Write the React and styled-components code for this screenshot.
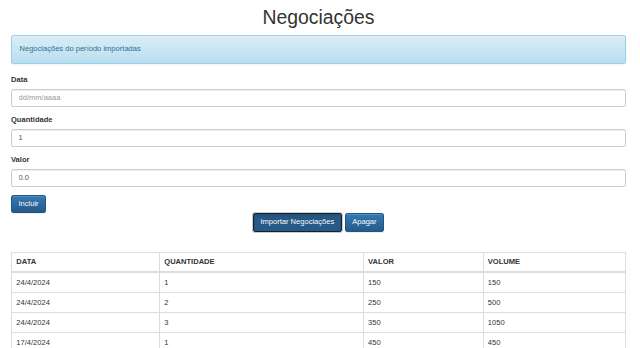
import React from "react";
import styled, { createGlobalStyle } from "styled-components";

const negociacoes = [
  { data: "24/4/2024", quantidade: 1, valor: 150, volume: 150 },
  { data: "24/4/2024", quantidade: 2, valor: 250, volume: 500 },
  { data: "24/4/2024", quantidade: 3, valor: 350, volume: 1050 },
  { data: "17/4/2024", quantidade: 1, valor: 450, volume: 450 },
];

export default function App() {
  return (
    <>
      <GlobalStyle />
      <Container>
        <Title>Negociações</Title>
        <Alert>Negociações do período importadas</Alert>
        <form>
          <FormGroup>
            <Label htmlFor="data">Data</Label>
            <Input id="data" type="text" placeholder="dd/mm/aaaa" />
          </FormGroup>
          <FormGroup>
            <Label htmlFor="quantidade">Quantidade</Label>
            <Input id="quantidade" type="text" defaultValue="1" />
          </FormGroup>
          <FormGroup>
            <Label htmlFor="valor">Valor</Label>
            <Input id="valor" type="text" defaultValue="0.0" />
          </FormGroup>
          <Button type="button">Incluir</Button>
        </form>
        <Actions>
          <Button type="button" $focused>
            Importar Negociações
          </Button>
          <Button type="button">Apagar</Button>
        </Actions>
        <Table>
          <colgroup>
            <col style={{ width: "24.1%" }} />
            <col style={{ width: "33.2%" }} />
            <col style={{ width: "19.5%" }} />
            <col style={{ width: "23.2%" }} />
          </colgroup>
          <thead>
            <tr>
              <Th>DATA</Th>
              <Th>QUANTIDADE</Th>
              <Th>VALOR</Th>
              <Th>VOLUME</Th>
            </tr>
          </thead>
          <tbody>
            {negociacoes.map((n, i) => (
              <tr key={i}>
                <Td>{n.data}</Td>
                <Td>{n.quantidade}</Td>
                <Td>{n.valor}</Td>
                <Td>{n.volume}</Td>
              </tr>
            ))}
          </tbody>
        </Table>
      </Container>
    </>
  );
}

const GlobalStyle = createGlobalStyle`
  body {
    margin: 0;
    background: #fff;
    font-family: "Liberation Sans", Arial, Helvetica, sans-serif;
    font-size: 7.56px;
    line-height: 1.42857;
    color: #333;
  }
  * {
    box-sizing: border-box;
  }
`;

const Container = styled.div`
  padding: 0 14px 0 11px;
`;

const Title = styled.h1`
  margin: 7px 0 7px;
  font-size: 19.4px;
  font-weight: 500;
  line-height: 1.1;
  text-align: center;
  color: #333;
`;

const Alert = styled.div`
  padding: 8.1px 8.1px 8.1px 7.5px;
  margin-bottom: 10.8px;
  border: 1px solid #9acfea;
  border-radius: 2.2px;
  color: #31708f;
  background-color: #d9edf7;
  background-image: linear-gradient(to bottom, #d9edf7 0, #b9def0 100%);
  box-shadow: inset 0 1px 0 rgba(255, 255, 255, 0.25),
    0 1px 2px rgba(0, 0, 0, 0.05);
`;

const FormGroup = styled.div`
  margin-bottom: 8.1px;
`;

const Label = styled.label`
  display: inline-block;
  margin-bottom: 2.7px;
  font-weight: 700;
  line-height: 10.8px;
`;

const Input = styled.input`
  display: block;
  width: 100%;
  height: 18.4px;
  padding: 3.2px 6.5px;
  font-family: inherit;
  font-size: 7.56px;
  line-height: 10.8px;
  color: #555;
  background: #fff;
  border: 1px solid #ccc;
  border-radius: 2.2px;
  box-shadow: inset 0 1px 1px rgba(0, 0, 0, 0.075);
  outline: none;
  &::placeholder {
    color: #999;
  }
`;

const Button = styled.button`
  display: inline-block;
  height: 18.4px;
  padding: 0 6.5px;
  font-family: inherit;
  font-size: 7.56px;
  line-height: 16.4px;
  color: #fff;
  text-shadow: 0 -1px 0 rgba(0, 0, 0, 0.2);
  border: 1px solid ${(p) => (p.$focused ? "#14202c" : "#245580")};
  border-radius: 2.2px;
  background-color: #265a88;
  background-image: ${(p) =>
    p.$focused
      ? "none"
      : "linear-gradient(to bottom, #337ab7 0, #265a88 100%)"};
  box-shadow: ${(p) =>
    p.$focused
      ? "0 0 0 1px #c9cdd2, inset 0 2px 3px rgba(0,0,0,.125)"
      : "inset 0 1px 0 rgba(255,255,255,.15), 0 1px 1px rgba(0,0,0,.075)"};
  cursor: pointer;
`;

const Actions = styled.div`
  display: flex;
  justify-content: center;
  gap: 3px;
  margin-bottom: 20.5px;
`;

const Table = styled.table`
  width: 100%;
  border-collapse: collapse;
  border-spacing: 0;
  border: 1px solid #ddd;
  table-layout: fixed;
`;

const Th = styled.th`
  padding: 3.7px 4.3px;
  text-align: left;
  font-weight: 700;
  line-height: 10.8px;
  border: 1px solid #ddd;
  border-bottom-width: 2px;
`;

const Td = styled.td`
  padding: 4.1px 4.3px;
  line-height: 10.8px;
  border: 1px solid #ddd;
`;
